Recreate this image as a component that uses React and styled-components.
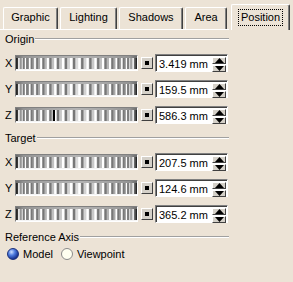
import React from 'react';
import styled, { createGlobalStyle } from 'styled-components';

const GlobalStyle = createGlobalStyle`
    body {
        margin: 0;
        background: #ece3d6;
        font-family: Tahoma, "Liberation Sans", Arial, sans-serif;
        font-size: 11px;
        color: #000;
    }
`

const tabs = [
    ['Graphic', 55],
    ['Lighting', 57],
    ['Shadows', 64],
    ['Area', 42],
    ['Position', 59],
]

const sections = [
    { title: 'Origin', rows: [['X', '3.419 mm', null], ['Y', '159.5 mm', null], ['Z', '586.3 mm', 37]] },
    { title: 'Target', rows: [['X', '207.5 mm', null], ['Y', '124.6 mm', null], ['Z', '365.2 mm', null]] },
]

// stripes of the thumbwheel, closer together near the edges like a cylinder
function Wheel({ mark }) {
    const w = 121
    const n = 22
    const stripes = []
    for (let i = 0; i < n; i++) {
        const t = -Math.PI / 2 + ((i + 0.5) * Math.PI) / n
        const x = w / 2 + (w / 2 - 3) * Math.sin(t)
        const sw = Math.max(1, 2.4 * Math.cos(t))
        stripes.push({ x, sw })
    }
    return (
        <WheelBox>
            <svg width={w} height={14} viewBox={`0 0 ${w} 14`}>
                <defs>
                    <linearGradient id="wheelBg" x1="0" x2="1" y1="0" y2="0">
                        <stop offset="0" stopColor="#202020" />
                        <stop offset="0.06" stopColor="#8a8a8a" />
                        <stop offset="0.25" stopColor="#b8b8b8" />
                        <stop offset="0.5" stopColor="#dcdcdc" />
                        <stop offset="0.75" stopColor="#b8b8b8" />
                        <stop offset="0.94" stopColor="#8a8a8a" />
                        <stop offset="1" stopColor="#202020" />
                    </linearGradient>
                </defs>
                <rect x="0" y="0" width={w} height="14" fill="url(#wheelBg)" />
                <rect x="0" y="0" width={w} height="2" fill="#9a9a9a" opacity="0.6" />
                {stripes.map(({ x, sw }, i) => (
                    <g key={i}>
                        <rect x={x - sw} y="2" width={sw} height="11" fill="#ffffff" />
                        <rect x={x + 0.5} y="2" width={sw} height="11" fill="#777" />
                    </g>
                ))}
                {mark && <rect x={mark} y="2" width="2" height="11" fill="#000" />}
                <rect x="0" y="13" width={w} height="1" fill="#f4f4f4" />
            </svg>
        </WheelBox>
    )
}

function Spinner() {
    return (
        <Spin>
            <SpinHalf>
                <svg width="9" height="5" viewBox="0 0 9 5"><path d="M4.5 0 L9 5 L0 5 Z" fill="#000" /></svg>
            </SpinHalf>
            <SpinHalf>
                <svg width="9" height="5" viewBox="0 0 9 5"><path d="M0 0 L9 0 L4.5 5 Z" fill="#000" /></svg>
            </SpinHalf>
        </Spin>
    )
}

export default function App() {
    return (
        <>
            <GlobalStyle />
            <TabBar>
                {tabs.map(([t, w]) => (
                    <Tab key={t} $w={w} $active={t === 'Position'}>
                        <TabLabel $active={t === 'Position'}>{t}</TabLabel>
                    </Tab>
                ))}
            </TabBar>
            <Panel>
                {sections.map(({ title, rows }) => (
                    <Section key={title} $gap={8}>
                        <Header>
                            <span>{title}</span>
                            <Groove />
                        </Header>
                        {rows.map(([axis, value, mark]) => (
                            <Row key={axis}>
                                <Axis>{axis}</Axis>
                                <Wheel mark={mark} />
                                <SmallButton><Dot /></SmallButton>
                                <Field>
                                    <Value>{value}</Value>
                                    <Spinner />
                                </Field>
                            </Row>
                        ))}
                    </Section>
                ))}
                <Section $gap={4}>
                    <Header>
                        <span>Reference Axis</span>
                        <Groove />
                    </Header>
                    <Radios>
                        <Option><Radio $checked />Model</Option>
                        <Option><Radio />Viewpoint</Option>
                    </Radios>
                </Section>
            </Panel>
        </>
    )
}

const TabBar = styled.div`
    display: flex;
    align-items: flex-end;
    height: 29px;
    padding-left: 3px;
    gap: 2px;
`
const Tab = styled.div`
    display: flex;
    align-items: center;
    justify-content: center;
    width: ${(p) => p.$w}px;
    height: ${(p) => (p.$active ? '26px' : '22px')};
    padding-bottom: ${(p) => (p.$active ? '1px' : '2px')};
    margin-left: ${(p) => (p.$active ? '2px' : '0')};
    margin-bottom: ${(p) => (p.$active ? '-1px' : '0')};
    z-index: ${(p) => (p.$active ? 2 : 1)};
    background: #ece3d6;
    border-top: 1px solid #fff;
    border-left: 1px solid #fff;
    border-right: 1px solid #404040;
    box-shadow: inset -1px 0 #808080;
    border-radius: 2px 2px 0 0;
    box-sizing: border-box;
    white-space: nowrap;
`
const TabLabel = styled.span`
    padding: 1px 2px;
    border: 1px dotted ${(p) => (p.$active ? '#000' : 'transparent')};
    line-height: 13px;
`
const Panel = styled.div`
    border-top: 1px solid #fff;
    padding: 2px 0 0 5px;
    width: 224px;
`
const Section = styled.div`
    display: flex;
    flex-direction: column;
    gap: ${(p) => p.$gap}px;
    margin-bottom: 7px;
`
const Header = styled.div`
    display: flex;
    align-items: center;
    height: 14px;
`
const Groove = styled.div`
    flex: 1;
    margin-left: 1px;
    border-top: 1px solid #a0a0a0;
    border-bottom: 1px solid #fff;
`
const Row = styled.div`
    display: flex;
    align-items: center;
    height: 18px;
`
const Axis = styled.span`
    width: 10px;
`
const WheelBox = styled.div`
    display: flex;
    border-top: 1px solid #808080;
    border-left: 1px solid #808080;
    border-right: 1px solid #fff;
    border-bottom: 1px solid #fff;
`
const SmallButton = styled.div`
    display: flex;
    align-items: center;
    justify-content: center;
    width: 12px;
    height: 12px;
    margin-left: 3px;
    box-sizing: border-box;
    background: #d4d0c8;
    border-top: 1px solid #fff;
    border-left: 1px solid #fff;
    border-right: 1px solid #404040;
    border-bottom: 1px solid #404040;
`
const Dot = styled.div`
    width: 4px;
    height: 4px;
    background: #000;
`
const Field = styled.div`
    display: flex;
    margin-left: 2px;
    height: 18px;
    box-sizing: border-box;
    border-top: 1px solid #808080;
    border-left: 1px solid #808080;
    border-right: 1px solid #fff;
    border-bottom: 1px solid #fff;
`
const Value = styled.div`
    width: 55px;
    box-sizing: border-box;
    background: #fff;
    padding-left: 2px;
    display: flex;
    align-items: center;
    font-size: 11px;
    white-space: nowrap;
    overflow: hidden;
    border-top: 1px solid #404040;
    border-left: 1px solid #404040;
`
const Spin = styled.div`
    display: flex;
    flex-direction: column;
    width: 16px;
    background: #fff;
    border-top: 1px solid #404040;
    padding: 1px;
    box-sizing: border-box;
    gap: 1px;
`
const SpinHalf = styled.div`
    flex: 1;
    display: flex;
    align-items: center;
    justify-content: center;
    background: #d4d0c8;
    border-top: 1px solid #fff;
    border-left: 1px solid #fff;
    border-right: 1px solid #404040;
    border-bottom: 1px solid #404040;
`
const Radios = styled.div`
    display: flex;
    gap: 8px;
    padding-left: 2px;
`
const Option = styled.label`
    display: flex;
    align-items: center;
    gap: 4px;
`
const Radio = styled.span`
    width: 12px;
    height: 12px;
    border-radius: 50%;
    box-sizing: border-box;
    border: 1px solid ${(p) => (p.$checked ? '#1a2f7a' : '#8a8a8a')};
    background: ${(p) =>
        p.$checked
            ? 'radial-gradient(circle at 35% 30%, #cfe0ff 0, #4f7de0 35%, #14308f 75%, #0a1a55 100%)'
            : '#fffff0'};
`
